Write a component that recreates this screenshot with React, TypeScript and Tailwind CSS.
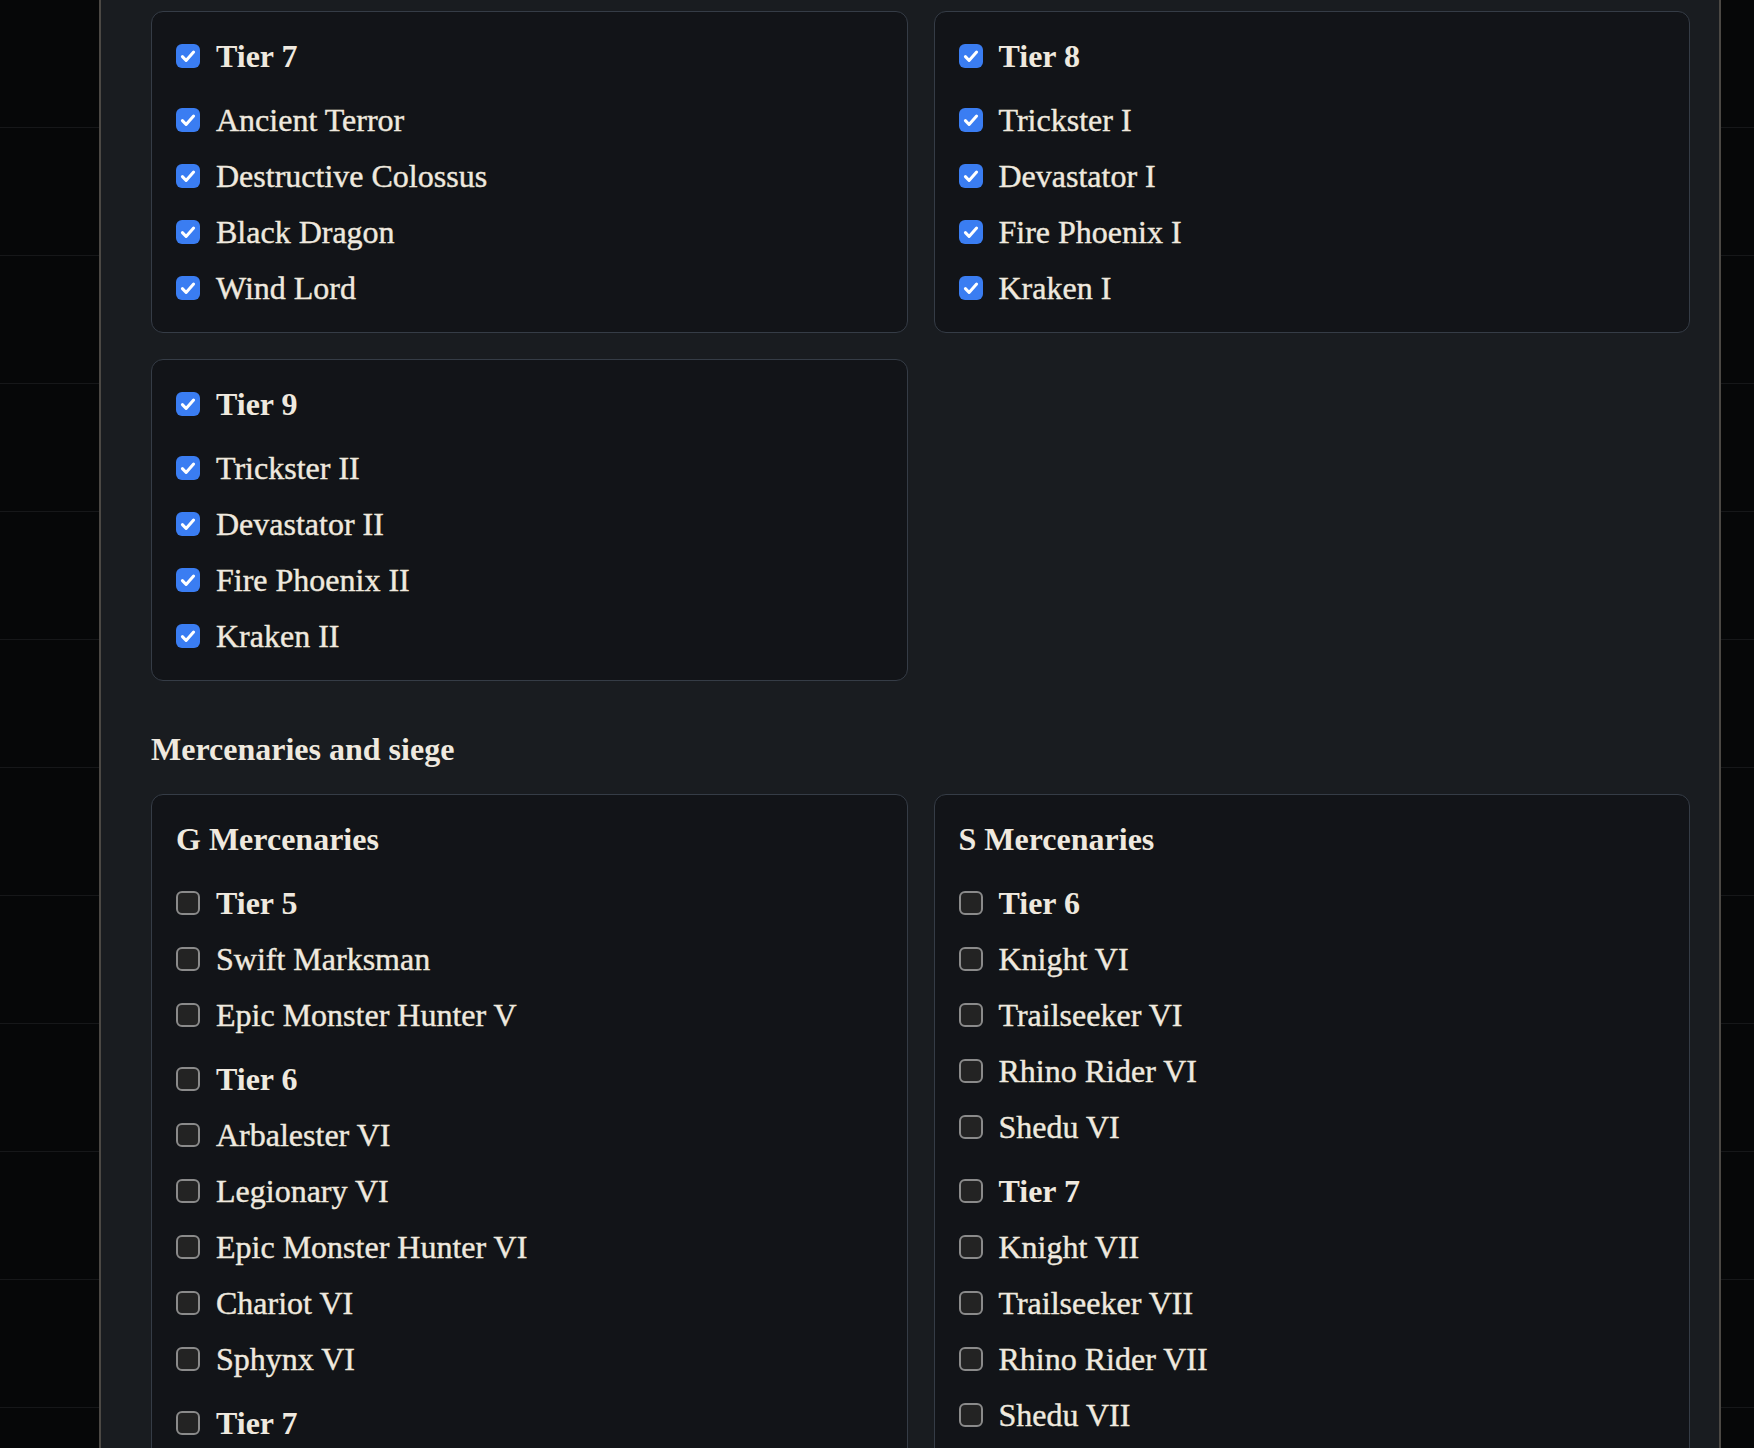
import React from "react";

type Group = { tier: string; items: string[] };

const TOP_TIERS: { tier: string; items: string[] }[] = [
  { tier: "Tier 7", items: ["Ancient Terror", "Destructive Colossus", "Black Dragon", "Wind Lord"] },
  { tier: "Tier 8", items: ["Trickster I", "Devastator I", "Fire Phoenix I", "Kraken I"] },
  { tier: "Tier 9", items: ["Trickster II", "Devastator II", "Fire Phoenix II", "Kraken II"] },
];

const G_MERCS: Group[] = [
  { tier: "Tier 5", items: ["Swift Marksman", "Epic Monster Hunter V"] },
  {
    tier: "Tier 6",
    items: ["Arbalester VI", "Legionary VI", "Epic Monster Hunter VI", "Chariot VI", "Sphynx VI"],
  },
  { tier: "Tier 7", items: [] },
];

const S_MERCS: Group[] = [
  { tier: "Tier 6", items: ["Knight VI", "Trailseeker VI", "Rhino Rider VI", "Shedu VI"] },
  { tier: "Tier 7", items: ["Knight VII", "Trailseeker VII", "Rhino Rider VII", "Shedu VII"] },
];

function Box({ checked }: { checked: boolean }) {
  if (checked) {
    return (
      <span className="flex h-6 w-6 shrink-0 items-center justify-center rounded-[6px] bg-[#3a7df2]">
        <svg className="h-6 w-6" viewBox="0 0 24 24" fill="none" stroke="white">
          <path strokeWidth={3} strokeLinecap="round" strokeLinejoin="round" d="M6.4 12.6l3.7 3.9 7.5-8.4" />
        </svg>
      </span>
    );
  }
  return <span className="h-6 w-6 shrink-0 rounded-[6px] border-2 border-[#8a8a8a] bg-[#232323]" />;
}

function Row({ label, checked, bold }: { label: string; checked: boolean; bold?: boolean }) {
  return (
    <div className="flex h-8 items-center gap-4">
      <Box checked={checked} />
      <span
        className={`whitespace-nowrap text-[32px] leading-8 ${
          bold ? "font-bold" : "[-webkit-text-stroke:0.4px_#efe9df]"
        }`}
      >
        {label}
      </span>
    </div>
  );
}

function Card({ children }: { children: React.ReactNode }) {
  return (
    <div className="rounded-xl border border-[#353c46] bg-[#121418] px-6 pt-7 pb-7">{children}</div>
  );
}

function GridLines() {
  return (
    <div className="flex flex-col">
      {Array.from({ length: 12 }).map((_, i) => (
        <div key={i} className="h-[128px] border-b border-[#161719]" />
      ))}
    </div>
  );
}

export default function App() {
  return (
    <div className="flex h-[1448px] w-full overflow-hidden bg-[#060708] font-['Liberation_Serif',serif] text-[#efe9df]">
      <div className="w-[99px] shrink-0">
        <GridLines />
      </div>

      <div className="w-[1622px] shrink-0 border-x-2 border-[#4b4844] bg-[#191c20] pt-[11px] pl-[50px] pr-[29px]">
        {/* Beasts by tier */}
        <div className="grid grid-cols-2 gap-[26px]">
          {TOP_TIERS.map((t) => (
            <Card key={t.tier}>
              <div className="flex flex-col gap-8">
                <Row label={t.tier} checked bold />
                <div className="flex flex-col gap-6">
                  {t.items.map((item) => (
                    <Row key={item} label={item} checked />
                  ))}
                </div>
              </div>
            </Card>
          ))}
        </div>

        <h2 className="mt-[52px] mb-[29px] text-[32px] font-bold leading-8">Mercenaries and siege</h2>

        <div className="grid grid-cols-2 items-start gap-[26px]">
          {[
            { title: "G Mercenaries", groups: G_MERCS },
            { title: "S Mercenaries", groups: S_MERCS },
          ].map((col) => (
            <Card key={col.title}>
              <div className="flex flex-col gap-8">
                <h3 className="text-[32px] font-bold leading-8">{col.title}</h3>
                {col.groups.map((g) => (
                  <div key={g.tier} className="flex flex-col gap-6">
                    <Row label={g.tier} checked={false} bold />
                    {g.items.map((item) => (
                      <Row key={item} label={item} checked={false} />
                    ))}
                  </div>
                ))}
              </div>
            </Card>
          ))}
        </div>
      </div>

      <div className="flex-1">
        <GridLines />
      </div>
    </div>
  );
}
